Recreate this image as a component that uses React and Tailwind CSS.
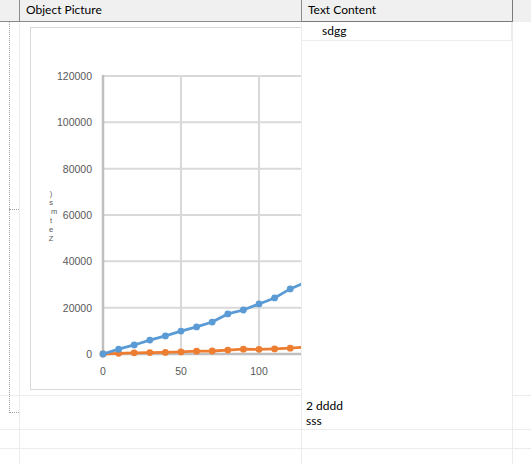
import React from 'react';

// values sampled every 10 units on the x axis
const BLUE = [0, 2100, 3900, 6000, 7800, 9900, 11700, 13800, 17300, 19000, 21600, 24200, 28100, 31000, 34000];
const ORANGE = [0, 300, 500, 600, 700, 900, 1200, 1300, 1700, 2100, 2000, 2200, 2500, 3000, 3300];

const px = (x) => 72 + x * 1.56;
const py = (v) => 326 - (v / 20000) * 46.33;

function Series({ values, color, width }) {
  const pts = values.map((v, i) => [px(i * 10), py(v)]);
  return (
    <g>
      <polyline points={pts.map((p) => p.join(',')).join(' ')} fill="none" stroke={color} strokeWidth={width} />
      {pts.map(([x, y], i) => (
        <circle key={i} cx={x} cy={y} r="3.4" fill={color} />
      ))}
    </g>
  );
}

function Chart() {
  const ticks = [0, 20000, 40000, 60000, 80000, 100000, 120000];
  return (
    <svg width="420" height="361" className="block">
      {ticks.slice(1).map((t) => (
        <line key={t} x1="72" x2="420" y1={py(t)} y2={py(t)} stroke="#d9d9d9" strokeWidth="2" />
      ))}
      {[50, 100, 150].map((x) => (
        <line key={x} x1={px(x)} x2={px(x)} y1="48" y2="326" stroke="#d9d9d9" strokeWidth="2" />
      ))}
      <line x1="72" x2="72" y1="47" y2="327" stroke="#bfbfbf" strokeWidth="2.5" />
      <line x1="71" x2="420" y1="326" y2="326" stroke="#bfbfbf" strokeWidth="2.5" />
      {ticks.map((t) => (
        <text key={t} x="61" y={py(t) + 4} textAnchor="end" fontSize="10.5" fill="#595959" fontFamily="Liberation Sans, sans-serif">
          {t}
        </text>
      ))}
      {[0, 50, 100].map((x) => (
        <text key={x} x={px(x)} y="347" textAnchor="middle" fontSize="10.5" fill="#595959" fontFamily="Liberation Sans, sans-serif">
          {x}
        </text>
      ))}
      {/* axis title, glyphs stacked the way the screenshot renders them */}
      <text x="20" y="168" textAnchor="middle" fontSize="7.5" fill="#595959" fontFamily="Liberation Sans, sans-serif">
        <tspan x="20">)</tspan>
        <tspan x="20" dy="9">s</tspan>
        <tspan x="23" dy="9">m</tspan>
        <tspan x="20" dy="9">t</tspan>
        <tspan x="20" dy="9">e</tspan>
        <tspan x="20" dy="9">Z</tspan>
      </text>
      <Series values={ORANGE} color="#ed7d31" width="2.8" />
      <Series values={BLUE} color="#5b9bd5" width="2.8" />
    </svg>
  );
}

export default function App() {
  return (
    <div className="w-[531px] h-[464px] overflow-hidden bg-white text-[12px] text-black font-['Lato',sans-serif]">
      {/* Header */}
      <div className="grid grid-cols-[20px_282px_211px_18px] h-[22px]">
        <div className="bg-[#f0f0f0] border-r border-b border-[#8c8c8c]" />
        <div className="bg-[#f0f0f0] border-r border-b border-[#8c8c8c] pl-[6px] leading-[20px]">Object Picture</div>
        <div className="bg-[#f0f0f0] border-r border-b border-[#7a7a7a] pl-[6px] leading-[20px]">Text Content</div>
        <div className="bg-[#f0f0f0]" />
      </div>

      {/* Row 1 */}
      <div className="grid grid-cols-[20px_282px_211px_18px] h-[374px]">
        <div className="flex flex-col border-r border-b border-[#ececec]">
          <div className="h-1/2 ml-[9px] border-l border-dotted border-[#a0a0a0]" />
          <div className="h-1/2 ml-[9px] border-l border-t border-dotted border-[#a0a0a0]" />
        </div>
        <div className="border-r border-b border-[#ececec] overflow-hidden pl-[10px] pt-[5px]">
          <div className="w-[440px] h-[363px] border border-[#d9d9d9] bg-white">
            <Chart />
          </div>
        </div>
        <div className="border-r border-[#ececec]">
          <div className="h-[19px] border-b border-r border-[#ececec] pl-[20px] leading-[18px]">sdgg</div>
        </div>
        <div className="border-b border-[#ececec]" />
      </div>

      {/* Row 2 */}
      <div className="grid grid-cols-[20px_282px_211px_18px] h-[34px]">
        <div className="flex flex-col border-r border-b border-[#ececec]">
          <div className="h-[17px] ml-[9px] border-l border-b border-dotted border-[#a0a0a0]" />
        </div>
        <div className="border-r border-b border-[#ececec]" />
        <div className="border-r border-b border-[#ececec] pl-[4px] pt-[2px] leading-[15px]">
          <div>2 dddd</div>
          <div>sss</div>
        </div>
        <div className="border-b border-[#ececec]" />
      </div>

      {/* Empty rows */}
      {[0, 1].map((i) => (
        <div key={i} className="grid grid-cols-[20px_282px_211px_18px] h-[19px]">
          <div className="border-r border-b border-[#ececec]" />
          <div className="border-r border-b border-[#ececec]" />
          <div className="border-r border-b border-[#ececec]" />
          <div className="border-b border-[#ececec]" />
        </div>
      ))}
    </div>
  );
}
